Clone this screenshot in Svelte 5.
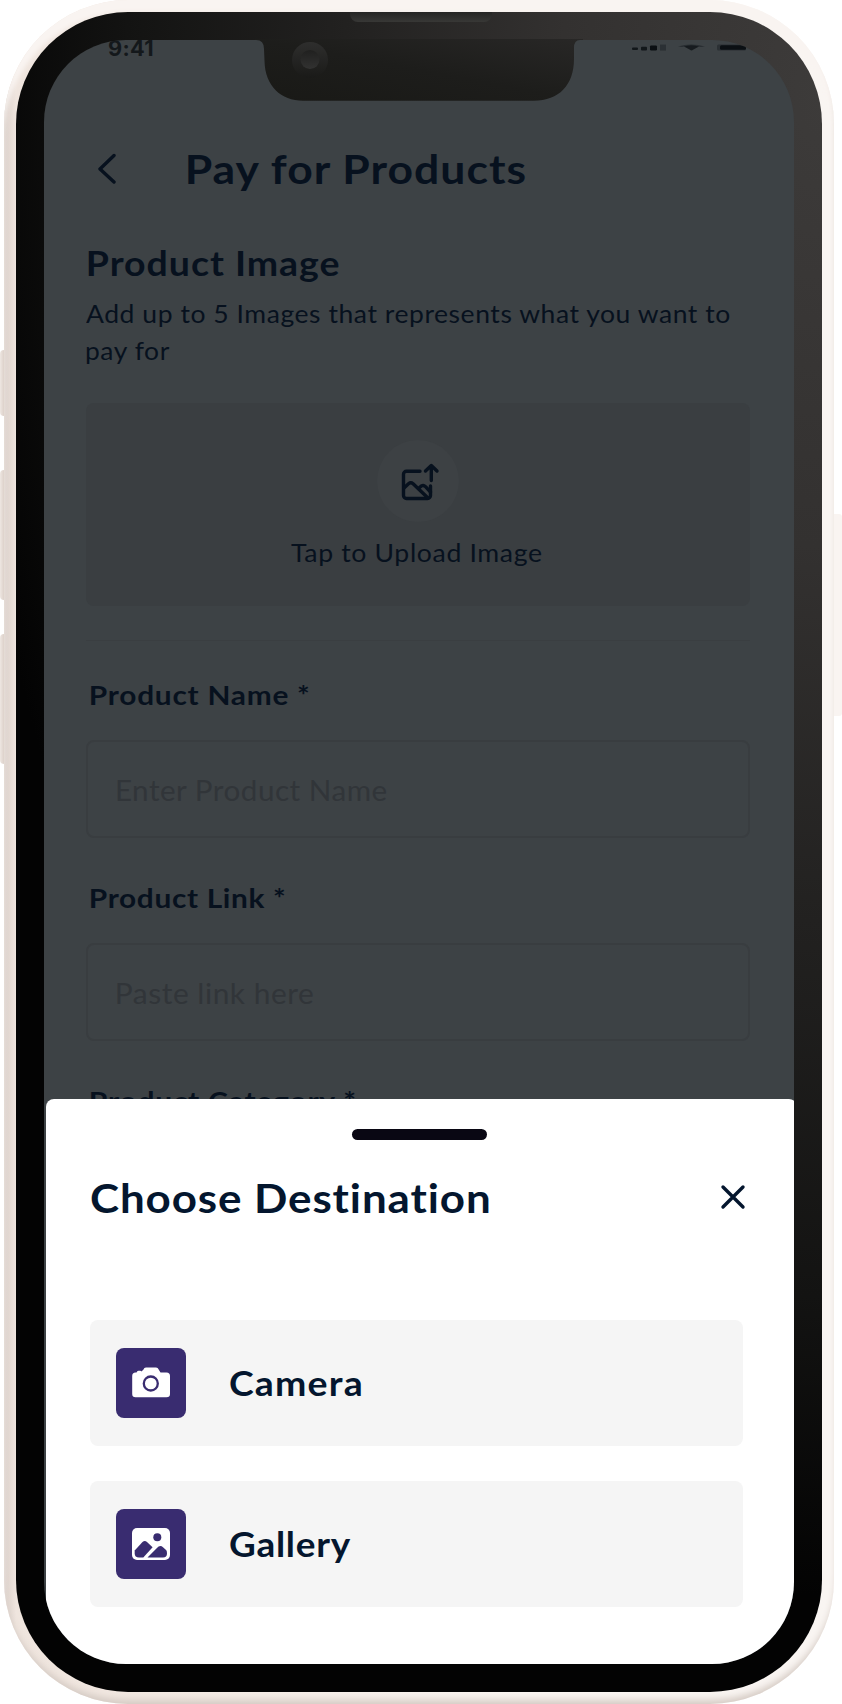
<script>
  const options = [
    { name: 'Camera', icon: 'camera', width: 131 },
    { name: 'Gallery', icon: 'gallery', width: 121 }
  ];

  // Sets a line of text so that its ink spans the given width:
  // part of the slack goes to tracking, the rest widens the letters.
  function fit(node, width) {
    const style = getComputedStyle(node);
    const ctx = document.createElement('canvas').getContext('2d');
    ctx.font = `${style.fontWeight} ${style.fontSize} ${style.fontFamily}`;
    const text = node.textContent;
    const m = ctx.measureText(text);
    const ink = m.actualBoundingBoxLeft + m.actualBoundingBoxRight;
    const tracking = ((width - ink) * 0.35) / (text.length - 1);
    const stretch = width / (ink + tracking * (text.length - 1));
    node.style.letterSpacing = `${tracking}px`;
    node.style.textIndent = `${m.actualBoundingBoxLeft}px`;
    node.style.width = `${width}px`;
    node.style.transform = `scaleX(${stretch})`;
  }
</script>

<div class="stage">
  <i class="key mute"></i>
  <i class="key up"></i>
  <i class="key down"></i>
  <i class="key power"></i>

  <div class="frame">
    <div class="bezel">
      <i class="speaker"></i>
      <div class="screen">
        <div class="status">
          <span class="time" use:fit={44.5}>9:41</span>
          <svg class="signals" width="116" height="8" viewBox="0 0 116 8">
            <rect x="1" y="3.500" width="6" height="2.600" rx="1" opacity=".85" />
            <rect x="10" y="2.800" width="6" height="3.600" rx="1" opacity=".85" />
            <rect x="19" y="1.400" width="7" height="5" rx="1.200" />
            <rect x="29" y="0.600" width="6" height="6" opacity=".35" />
            <path d="M47 2.400Q60-1.600 74 2.400L70 3Q60 1 51 3z" opacity=".4" />
            <path d="M53 2.600Q60 .4 68 2.600L62 5.800Q60.500 7 59 5.800z" opacity=".75" />
            <rect x="86" y=".6" width="29" height="6" rx="1.500" opacity=".35" />
            <rect x="89" y="1.300" width="26" height="4.400" rx="1.500" />
          </svg>
        </div>

        <header>
          <svg class="back" width="20" height="32" viewBox="0 0 20 32"><path d="M16 3.500 2 17 16 30" /></svg>
          <h1 use:fit={339}>Pay for Products</h1>
        </header>

        <main>
          <h2 use:fit={251}>Product Image</h2>
          <p class="hint">
            <span use:fit={645}>Add up to 5 Images that represents what you want to</span>
            <span use:fit={84}>pay for</span>
          </p>

          <div class="upload">
            <div class="disc">
              <svg width="60" height="60" viewBox="0 0 60 60">
                <path d="M30 20.200H16.500a3 3 0 0 0-3 3V44.500a3 3 0 0 0 3 3H37.500a3 3 0 0 0 3-3V35" />
                <path d="M41.300 29.500V15M35.500 20l5.800-5.500L47 20" />
                <path d="M14 37 18.500 32.700q2.300-1.900 4.600 0L38 47M29.500 36.500l2-1.600q2-1.300 4 .7L40.500 41" />
              </svg>
            </div>
            <span class="tap" use:fit={250}>Tap to Upload Image</span>
          </div>

          <div class="rule"></div>

          <label class="field"><span use:fit={218}>Product Name *</span></label>
          <div class="input"><span use:fit={270}>Enter Product Name</span></div>
          <label class="field"><span use:fit={194}>Product Link *</span></label>
          <div class="input"><span use:fit={196}>Paste link here</span></div>
          <label class="field"><span use:fit={265}>Product Category *</span></label>
        </main>

        <section class="sheet">
          <i class="handle"></i>
          <div class="title">
            <h1 use:fit={399}>Choose Destination</h1>
            <svg width="26" height="26" viewBox="0 0 26 26"><path d="M3 3 23 23M23 3 3 23" /></svg>
          </div>
          <div class="options">
            {#each options as option}
              <div class="option">
                <div class="tile">
                  {#if option.icon === 'camera'}
                    <svg width="38" height="32" viewBox="0 0 38 32">
                      <path fill="#fff" d="M3.500 5.500H4.500Q5 3.700 6.500 3.700H8Q9.300 3.700 9.500 4.600L11.500 2.500Q12 .5 14 .5H24Q26 .5 26.500 2.200L28.500 5.500H34.500Q38 5.500 38 9V27Q38 30.300 34.500 30.300H3.500Q.2 30.300.2 27V9Q.2 5.500 3.500 5.500z" />
                      <circle cx="18.800" cy="16.500" r="7" fill="none" stroke="#392c70" stroke-width="2.300" />
                    </svg>
                  {:else}
                    <svg width="38" height="32" viewBox="0 0 38 32">
                      <rect width="38" height="32" rx="5" fill="#fff" />
                      <g fill="#392c70">
                        <circle cx="25.300" cy="9.300" r="4" />
                        <path d="M2.700 22.500 10.500 14Q12.700 12 15 14L20.600 19.300 11.300 29.600H7Q2.700 29.600 2.700 25.500z" />
                        <path d="M15.500 29.600 24.700 20.200Q28 16.500 31 19.200L34.300 22.300Q35 23 35 25.500 35 29.600 31 29.600z" />
                      </g>
                    </svg>
                  {/if}
                </div>
                <span class="name" use:fit={option.width}>{option.name}</span>
              </div>
            {/each}
          </div>
        </section>
      </div>

      <svg class="notch" width="328" height="62" viewBox="0 0 328 62">
        <defs>
          <linearGradient id="notchFill" x1="0" y1="1" x2="1" y2="0">
            <stop offset="0" stop-color="#191916" />
            <stop offset=".5" stop-color="#1d1d1b" />
            <stop offset="1" stop-color="#282726" />
          </linearGradient>
          <linearGradient id="lens" x1="0" y1="0" x2="0" y2="1">
            <stop offset="0" stop-color="#2e2e2d" />
            <stop offset="1" stop-color="#1a1a18" />
          </linearGradient>
          <linearGradient id="glass" x1="0" y1="0" x2="0" y2="1">
            <stop offset="0" stop-color="#20201f" />
            <stop offset="1" stop-color="#323231" />
          </linearGradient>
        </defs>
        <path fill="url(#notchFill)" d="M0 0H328V1H325Q319 1 319 9V20C319 46 304 61.700 279 61.700H48C26 61.700 10 47 9.500 22L9 10Q9 1 1 1H0z" />
        <circle cx="55" cy="21" r="18" fill="url(#lens)" />
        <circle cx="55" cy="20.500" r="9.500" fill="url(#glass)" />
      </svg>
    </div>
  </div>
</div>

<style>
  :global(body) { background: #fff; }
  * { box-sizing: border-box; margin: 0; }
  i, svg { display: block; flex: none; }
  .stage {
    position: relative;
    width: 842px;
    height: 1704px;
    padding: 0 8px 0 4px;
    overflow: hidden;
    font-family: Lato, sans-serif;
    color: #07111e;
  }
  .key {
    position: absolute;
    left: 0;
    width: 8px;
    background: linear-gradient(90deg, #eee7e2, #ddd1ca 4px);
    border-radius: 4px 0 0 4px;
  }
  .mute { top: 350px; height: 66px; }
  .up { top: 470px; height: 130px; }
  .down { top: 634px; height: 130px; }
  .power {
    left: auto;
    right: 0;
    top: 514px;
    width: 12px;
    height: 202px;
    border-radius: 0 3px 3px 0;
    background: #f9f4f1;
  }
  .frame {
    position: relative;
    height: 1704px;
    padding: 12px;
    border-radius: 124px;
    background: linear-gradient(90deg, #dacfc9, #efe5de 12px, #f1e7e0 100px, #f9f4f0 520px, #f9f5f2);
    box-shadow: inset 0 -7px 7px -3px #d5cbc4, inset 0 12px 4px #f9f4f1;
  }
  .bezel {
    position: relative;
    height: 1680px;
    padding: 28px;
    border-radius: 112px;
    background: radial-gradient(ellipse 870px 1500px at 100% 5%, #3d3b3a 0%, #333130 30%, #222120 55%, #131312 80%, #030303 100%);
  }
  .speaker {
    position: absolute;
    top: 0;
    left: 334px;
    width: 142px;
    height: 10px;
    border-radius: 0 0 8px 8px;
    background: linear-gradient(#252524, #383836);
  }
  .screen {
    position: relative;
    width: 750px;
    height: 1624px;
    overflow: hidden;
    border-radius: 82px;
    background: #3d4245;
  }
  .notch { position: absolute; left: 239px; top: 27px; }
  .status {
    display: flex;
    height: 103px;
    padding: 0 65px 0 63.500px;
    justify-content: space-between;
  }
  .time {
    height: 18px;
    font-family: Inter, sans-serif;
    font-size: 21px;
    font-weight: 700;
    line-height: 18px;
    color: #14181b;
  }
  .signals { margin: 4px -18px 0 0; fill: #0b0f13; }
  header {
    display: flex;
    align-items: center;
    height: 50px;
    padding-left: 54px;
    gap: 69.500px;
  }
  .back path, .disc path, .title path {
    fill: none;
    stroke: #07111e;
    stroke-width: 3.400;
    stroke-linecap: round;
    stroke-linejoin: round;
  }
  h1, h2, span { white-space: nowrap; transform-origin: left center; }
  h1 { position: relative; top: 1px; font-size: 41px; line-height: 50px; font-weight: 700; }
  h2 { margin-left: 2px; font-size: 34.500px; line-height: 42px; font-weight: 700; }
  main { padding: 49px 44px 0 42px; }
  .hint { padding-top: 12px; height: 119px; font-size: 24.500px; line-height: 36.600px; }
  .hint span { display: block; }
  .upload {
    display: flex;
    flex-direction: column;
    align-items: center;
    height: 203px;
    padding-top: 37px;
    gap: 15.600px;
    border-radius: 8px;
    background: #3a3e41;
  }
  .disc {
    display: grid;
    place-items: center;
    width: 82px;
    height: 82px;
    border-radius: 50%;
    background: #3d4144;
  }
  .disc svg { margin: -1px 0 0 3px; }
  .tap { display: block; margin-right: 4px; font-size: 24.500px; line-height: 30px; }
  .rule { margin-top: 34px; height: 1px; background: #3a3e41; }
  .field {
    display: block;
    height: 34px;
    margin-top: 36px;
    padding: 1px 0 0 5px;
    font-size: 27.500px;
    line-height: 34px;
    font-weight: 700;
  }
  .field span { display: block; }
  .input {
    display: flex;
    align-items: center;
    height: 98px;
    margin: 29px 0 42px;
    padding: 1px 0 0 28.500px;
    border: 2px solid #393d40;
    border-radius: 8px;
    font-size: 28px;
    line-height: 34px;
    color: #313539;
  }
  .input + .field { margin-top: 0; }
  .sheet {
    position: absolute;
    inset: 1059px -3px 0 2px;
    padding: 30px 54px 0 43.500px;
    border-radius: 8px 8px 0 0;
    background: #fff;
    color: #04162e;
  }
  .handle {
    width: 135px;
    height: 10.500px;
    margin: 0 auto;
    position: relative;
    left: 3px;
    border-radius: 6px;
    background: #090713;
  }
  .title {
    display: flex;
    align-items: center;
    justify-content: space-between;
    margin-top: 32px;
    padding-left: 1.500px;
  }
  .title svg { margin: 1px -3px 0 0; }
  .title path { stroke: #04162e; }
  .options { display: flex; flex-direction: column; gap: 35px; margin-top: 98.500px; }
  .option {
    display: flex;
    align-items: center;
    height: 126px;
    padding-left: 26.500px;
    gap: 44px;
    border-radius: 8px;
    background: #f5f5f5;
  }
  .tile {
    display: grid;
    place-items: center;
    width: 70px;
    height: 70px;
    border-radius: 8px;
    background: #392c70;
  }
  .name { font-size: 34.500px; line-height: 42px; font-weight: 700; }
</style>
